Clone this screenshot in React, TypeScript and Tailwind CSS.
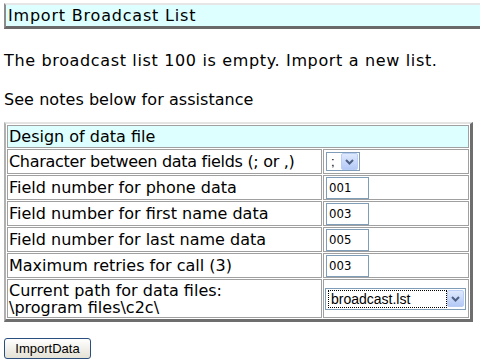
import React from "react";

const rows = [
  { label: "Field number for phone data", value: "001" },
  { label: "Field number for first name data", value: "003" },
  { label: "Field number for last name data", value: "005" },
  { label: "Maximum retries for call (3)", value: "003" },
];

function DropArrow() {
  return (
    <div className="flex h-[17px] w-[17px] items-center justify-center rounded-[2px] border border-[#b9cdf6] bg-linear-to-b from-[#dfe9fd] to-[#b4c9f5]">
      <svg width="9" height="6" viewBox="0 0 9 6">
        <path d="M1 1 L4.5 4.5 L8 1" fill="none" stroke="#4d6185" strokeWidth="2" />
      </svg>
    </div>
  );
}

function TextBox({ value }: { value: string }) {
  return (
    <input
      readOnly
      defaultValue={value}
      className="block h-[22px] w-[43px] border border-[#7f9db9] bg-white px-[2px] text-[13px] text-black outline-none [font-family:'Liberation_Sans_Narrow','DejaVu_Sans_Condensed','Liberation_Sans',sans-serif]"
    />
  );
}

export default function App() {
  return (
    <div className="min-h-[362px] bg-white px-[4px] pt-[3px] text-black [font-family:'DejaVu_Sans',Verdana,sans-serif]">
      <div className="-mr-[10px] flex h-[26px] items-center border-t-2 border-b-[3px] border-l-2 border-t-[#e6e6e6] border-b-[#6a6a6a] border-l-[#8c8c8c] bg-[#ddffff] pl-[2px] text-[16px] tracking-[0.8px]">
        Import Broadcast List
      </div>

      <h3 className="mt-[22px] text-[16px] leading-[20px] tracking-[0.65px]">
        The broadcast list 100 is empty. Import a new list.
      </h3>

      <p className="mt-[20px] text-[16px] leading-[18px] tracking-[0.05px]">See notes below for assistance</p>

      <table className="mt-[13px] w-[469px] border-separate border-spacing-[1px] border-t-2 border-l-2 border-r-[3px] border-b-[3px] border-t-[#e3e3e3] border-l-[#b0b0b0] border-r-[#6e6e6e] border-b-[#6e6e6e] text-[16px]">
        <tbody>
          <tr>
            <td colSpan={2} className="h-[23px] border border-[#a0a0a0] bg-[#ddffff] p-0 pl-[1px] leading-[20px]">
              Design of data file
            </td>
          </tr>
          <tr>
            <td className="h-[25px] w-[315px] border border-[#a0a0a0] p-0 pl-[1px] leading-[20px] tracking-[-0.3px]">
              Character between data fields (; or ,)
            </td>
            <td className="h-[25px] border border-[#a0a0a0] p-0 pl-[2px]">
              <div className="flex h-[19px] w-[34px] items-center justify-between border border-[#7f9db9] bg-white pl-[4px] pr-[1px] text-[13px] [font-family:'Liberation_Sans',sans-serif]">
                <span>;</span>
                <DropArrow />
              </div>
            </td>
          </tr>
          {rows.map((r) => (
            <tr key={r.label}>
              <td className="h-[25px] border border-[#a0a0a0] p-0 pl-[1px] leading-[20px]">{r.label}</td>
              <td className="h-[25px] border border-[#a0a0a0] p-0 pl-[2px]">
                <TextBox value={r.value} />
              </td>
            </tr>
          ))}
          <tr>
            <td className="h-[39px] border border-[#a0a0a0] p-0 pl-[1px] leading-[17px]">
              Current path for data files:
              <br />
              \program files\c2c\
            </td>
            <td className="h-[39px] border border-[#a0a0a0] p-0 pl-[1px]">
              <div className="flex h-[22px] w-[141px] items-center justify-between border border-[#7f9db9] bg-white pl-[2px] pr-[1px] text-[14px] [font-family:'Liberation_Sans',sans-serif]">
                <span className="flex h-[18px] w-[120px] items-center border border-dotted border-black pl-[2px] leading-none">
                  broadcast.lst
                </span>
                <DropArrow />
              </div>
            </td>
          </tr>
        </tbody>
      </table>

      <button className="mt-[16px] flex h-[21px] w-[87px] items-center justify-center rounded-[3px] border border-[#2a4f7e] bg-linear-to-b from-white to-[#e4e1d5] text-[13px] text-black [font-family:'Liberation_Sans',sans-serif]">
        ImportData
      </button>
    </div>
  );
}
